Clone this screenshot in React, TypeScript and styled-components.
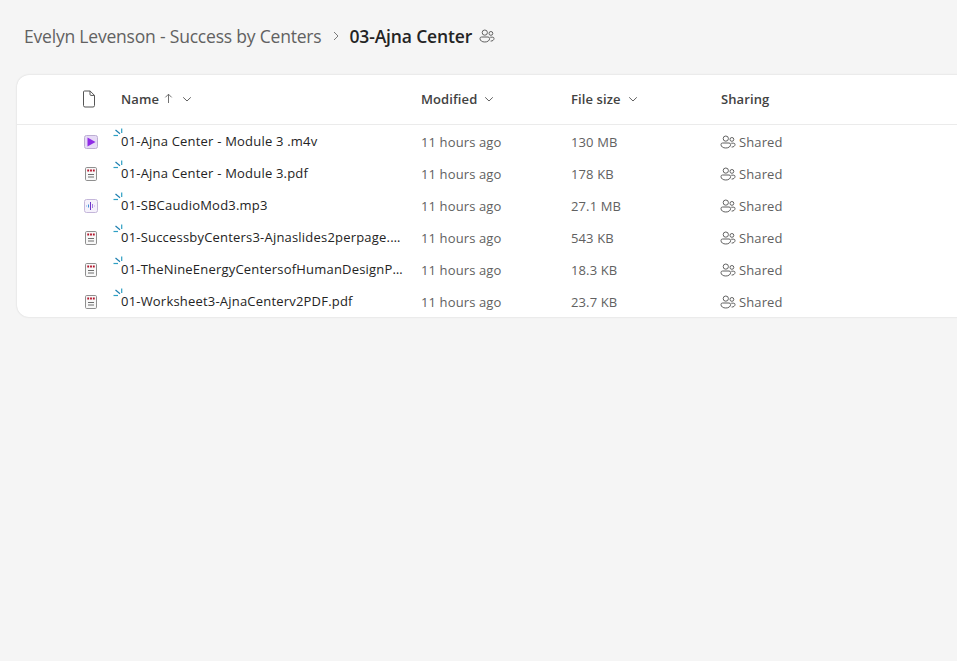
import React from "react";
import styled, { createGlobalStyle } from "styled-components";

const GlobalStyle = createGlobalStyle`
  html, body {
    margin: 0;
    height: 100%;
    background: #f5f5f5;
    font-family: "Open Sans", "Noto Sans", "Liberation Sans", sans-serif;
    overflow: hidden;
  }
`;

type Kind = "video" | "pdf" | "audio";

const files: { name: string; kind: Kind; size: string }[] = [
  { name: "01-Ajna Center - Module 3 .m4v", kind: "video", size: "130 MB" },
  { name: "01-Ajna Center - Module 3.pdf", kind: "pdf", size: "178 KB" },
  { name: "01-SBCaudioMod3.mp3", kind: "audio", size: "27.1 MB" },
  { name: "01-SuccessbyCenters3-Ajnaslides2perpage.pdf", kind: "pdf", size: "543 KB" },
  { name: "01-TheNineEnergyCentersofHumanDesignPresentation.pdf", kind: "pdf", size: "18.3 KB" },
  { name: "01-Worksheet3-AjnaCenterv2PDF.pdf", kind: "pdf", size: "23.7 KB" },
];

const SharedIcon = ({ size = 16 }: { size?: number }) => (
  <svg width={size} height={size} viewBox="0 0 16 16" fill="none" stroke="currentColor" strokeWidth="1">
    <circle cx="5.800" cy="4.600" r="2.600" />
    <circle cx="11.900" cy="5.400" r="1.900" />
    <path d="M2.600 9h6.400a1.600 1.600 0 0 1 1.600 1.600c0 2-2 3.400-4.800 3.400S1 12.600 1 10.600A1.600 1.600 0 0 1 2.600 9Z" />
    <path d="M11.200 9.200h2.600A1.300 1.300 0 0 1 15 10.500c0 1.500-1.300 2.600-3.400 2.600" />
  </svg>
);

const Chevron = () => (
  <svg width="12" height="12" viewBox="0 0 12 12" fill="none" stroke="#616161" strokeWidth="1">
    <path d="M2.200 4.300 6 8l3.800-3.700" />
  </svg>
);

const FileTypeIcon = ({ kind }: { kind: Kind }) => {
  if (kind === "video") {
    return (
      <svg width="16" height="16" viewBox="0 0 16 16">
        <rect x="1.500" y="1.500" width="13" height="13" rx="2" fill="#e6daf6" stroke="#bcaed2" strokeWidth="1" />
        <path d="M4.500 3.500v9L12.500 8Z" fill="#8f2be6" />
      </svg>
    );
  }
  if (kind === "audio") {
    return (
      <svg width="16" height="16" viewBox="0 0 16 16">
        <rect x="1.500" y="1.500" width="13" height="13" rx="2" fill="#f5f1fb" stroke="#c4b6da" strokeWidth="1" />
        <path d="M7.500 4v8" stroke="#6f35c9" strokeWidth="1" />
        <path d="M9.500 6v4" stroke="#a57be0" strokeWidth="1" />
        <path d="M5.500 6.500v3" stroke="#3f8fd8" strokeWidth="1" />
        <path d="M3.500 7.500v1" stroke="#7fb5e6" strokeWidth="1" />
        <path d="M11.500 7.500v1" stroke="#c3a8ec" strokeWidth="1" />
      </svg>
    );
  }
  return (
    <svg width="16" height="16" viewBox="0 0 16 16">
      <rect x="2.500" y="1.500" width="11" height="13" rx="1.200" fill="#f8f8f8" stroke="#8f8f8f" strokeWidth="1" />
      <path d="M4.300 4.600h1.800M7.100 4.600h1.800M9.900 4.600h1.800" stroke="#b3122a" strokeWidth="2" />
      <path d="M5 8.500h6M5 11h6" stroke="#6e6e6e" strokeWidth="1" />
    </svg>
  );
};

const NewBadge = () => (
  <svg width="11" height="11" viewBox="0 0 11 11" fill="none" strokeWidth="1.200">
    <path d="M8.700 0.500v4.500" stroke="#2e9fc4" />
    <path d="M0.500 7.500h4.500" stroke="#2e9fc4" />
    <path d="M2.500 2l4.500 3.800" stroke="#1f7fb0" />
  </svg>
);

export default function App() {
  return (
    <Page>
      <GlobalStyle />
      <Breadcrumb>
        <Crumb>Evelyn Levenson - Success by Centers</Crumb>
        <CrumbArrow>
          <svg width="12" height="12" viewBox="0 0 12 12" fill="none" stroke="#7a7a7a" strokeWidth="1">
            <path d="M4 2l4 4-4 4" />
          </svg>
        </CrumbArrow>
        <Current>03-Ajna Center</Current>
        <CrumbShare>
          <SharedIcon />
        </CrumbShare>
      </Breadcrumb>
      <Card>
        <HeaderRow>
          <HeadIcon>
            <svg width="16" height="18" viewBox="0 0 16 18" fill="none" stroke="#555" strokeWidth="1">
              <path d="M3.500 1h5.600L13.500 5.400V15.500a1.500 1.500 0 0 1-1.500 1.500H4a1.500 1.500 0 0 1-1.500-1.500V2a1 1 0 0 1 1-1Z" />
              <path d="M9 1v3.400a1 1 0 0 0 1 1h3.500" />
            </svg>
          </HeadIcon>
          <HeadCell>
            Name
            <SortArrow>
              <svg width="9" height="11" viewBox="0 0 9 11" fill="none" stroke="#616161" strokeWidth="0.900">
                <path d="M4.500 10V1.200M1.300 4.400l3.200-3.200 3.200 3.200" />
              </svg>
            </SortArrow>
            <Chevron />
          </HeadCell>
          <HeadCell>
            Modified
            <Chevron />
          </HeadCell>
          <HeadCell>
            File size
            <Chevron />
          </HeadCell>
          <HeadCell>Sharing</HeadCell>
        </HeaderRow>
        <Rows>
          {files.map((f) => (
            <Row key={f.name}>
              <RowIcon>
                <FileTypeIcon kind={f.kind} />
              </RowIcon>
              <NameCell>
                <Badge>
                  <NewBadge />
                </Badge>
                <FileName>{f.name}</FileName>
              </NameCell>
              <MutedCell>11 hours ago</MutedCell>
              <MutedCell>{f.size}</MutedCell>
              <SharedCell>
                <SharedIcon />
                Shared
              </SharedCell>
            </Row>
          ))}
        </Rows>
      </Card>
    </Page>
  );
}

const Page = styled.div`
  width: 957px;
  height: 661px;
  padding: 0 0 0 17px;
  box-sizing: border-box;
  overflow: hidden;
`;

const Breadcrumb = styled.div`
  height: 75px;
  display: flex;
  align-items: center;
  padding: 0 0 3px 7px;
  box-sizing: border-box;
`;

const Crumb = styled.span`
  font-size: 17.500px;
  color: #616161;
  letter-spacing: -0.2px;
  white-space: nowrap;
`;

const CrumbArrow = styled.span`
  display: flex;
  margin: 0 7px 0 9px;
`;

const Current = styled.span`
  font-size: 17.500px;
  font-weight: 600;
  color: #242424;
  letter-spacing: -0.15px;
  white-space: nowrap;
`;

const CrumbShare = styled.span`
  display: flex;
  margin-left: 7px;
  color: #616161;
`;

const Card = styled.div`
  width: 960px;
  height: 242px;
  background: #fff;
  border-radius: 12px 0 0 12px;
  box-shadow: 0 0 2px rgba(0, 0, 0, 0.16);
`;

const columns = "64px 40px 300px 150px 150px 1fr";

const HeaderRow = styled.div`
  height: 50px;
  padding-bottom: 2px;
  display: grid;
  grid-template-columns: ${columns};
  align-items: center;
  border-bottom: 1px solid #ebebeb;
  box-sizing: border-box;
`;

const Rows = styled.div`
  padding-top: 1px;
`;

const Row = styled.div`
  height: 32px;
  display: grid;
  grid-template-columns: ${columns};
  align-items: center;
`;

const HeadIcon = styled.div`
  grid-column: 2;
  display: flex;
  align-items: center;
  height: 18px;
`;

const RowIcon = styled.div`
  grid-column: 2;
  display: flex;
  align-items: center;
  height: 18px;
  margin-left: 2px;
`;

const HeadCell = styled.div`
  display: flex;
  align-items: center;
  gap: 6px;
  font-size: 13px;
  font-weight: 600;
  color: #424242;
  letter-spacing: 0.1px;
`;

const SortArrow = styled.span`
  display: flex;
  margin: 0 2px 0 -1px;
`;

const NameCell = styled.div`
  position: relative;
  min-width: 0;
  padding-right: 18px;
`;

const Badge = styled.span`
  position: absolute;
  left: -8px;
  top: -6px;
  display: flex;
`;

const FileName = styled.div`
  font-size: 13px;
  color: #242424;
  letter-spacing: 0.2px;
  white-space: nowrap;
  overflow: hidden;
  text-overflow: ellipsis;
  margin-top: -2px;
`;

const MutedCell = styled.div`
  font-size: 13px;
  color: #616161;
  letter-spacing: 0.12px;
`;

const SharedCell = styled(MutedCell)`
  display: flex;
  align-items: center;
  gap: 3px;
  margin-left: -1px;
`;
